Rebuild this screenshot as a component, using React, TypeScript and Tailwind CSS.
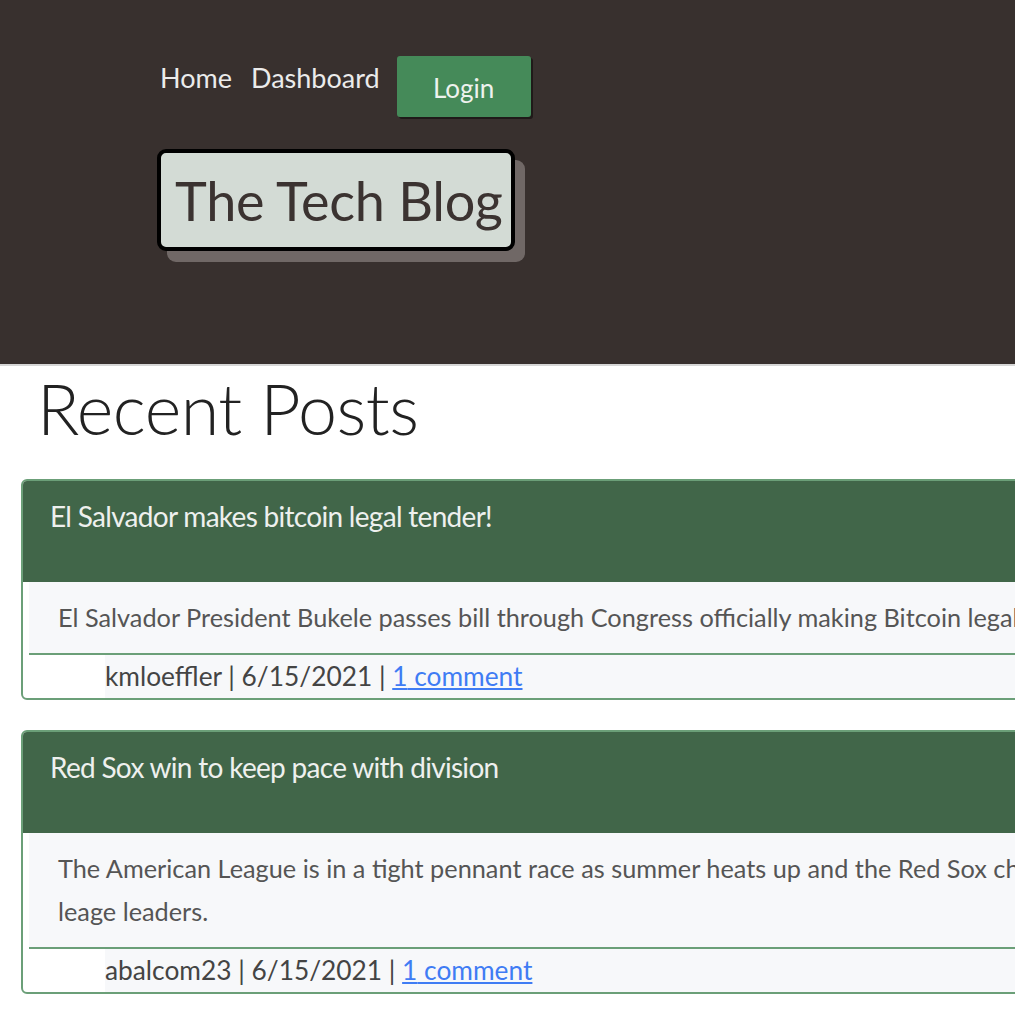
import React from "react";

type Post = {
  id: number;
  title: string;
  body: React.ReactNode;
  author: string;
  date: string;
  comments: number;
};

const posts: Post[] = [
  {
    id: 1,
    title: "El Salvador makes bitcoin legal tender!",
    body: "El Salvador President Bukele passes bill through Congress officially making Bitcoin legal tender.",
    author: "kmloeffler",
    date: "6/15/2021",
    comments: 1,
  },
  {
    id: 2,
    title: "Red Sox win to keep pace with division",
    body: (
      <>
        The American League is in a tight pennant race as summer heats up and the Red Sox chase the
        <br />
        leage leaders.
      </>
    ),
    author: "abalcom23",
    date: "6/15/2021",
    comments: 1,
  },
];

function PostCard({ post }: { post: Post }) {
  return (
    <div className="w-[1300px] rounded-md border-2 border-[#6b9f78] overflow-hidden bg-white">
      {/* header */}
      <div className="bg-[#416649] h-[101px] pl-[27px] pt-[17px]">
        <h3 className="text-[28px] leading-[36px] tracking-[-0.7px] text-[#eef0ee] whitespace-nowrap">{post.title}</h3>
      </div>
      {/* body */}
      <div className="ml-[6px] bg-[#f7f8fa] border-b-2 border-[#6b9f78] pl-[29px] py-[14px] text-[25.3px] leading-[43px] text-[#555] whitespace-nowrap">
        {post.body}
      </div>
      {/* footer */}
      <div className="ml-[6px] pl-[76px] h-[43px]">
        <div className="bg-[#f7f8fa] h-full flex items-center text-[26.3px] text-[#444]">
          <span>
            {post.author} | {post.date} |{" "}
            <a href="#" className="text-[#3f7cf4] underline">
              {post.comments} comment
            </a>
          </span>
        </div>
      </div>
    </div>
  );
}

export default function App() {
  return (
    <div className="w-[1015px] h-[1015px] overflow-hidden bg-white font-['Lato','Liberation_Sans',sans-serif]">
      <header className="bg-[#38302e] h-[366px] border-b-2 border-[#d6d6d6] pl-[157px] pt-[56px]">
        <nav className="flex items-start">
          <a href="#" className="text-[27px] leading-[44px] text-[#ebebeb] ml-[3px]">
            Home
          </a>
          <a href="#" className="text-[27px] leading-[44px] text-[#ebebeb] ml-[19px]">
            Dashboard
          </a>
          <button className="ml-[17px] w-[134px] h-[61px] rounded-[3px] bg-[#458a59] text-[26px] text-[#eef2ee] pt-[3px] shadow-[2px_2px_0_#1f1a19]">
            Login
          </button>
        </nav>
        <div className="mt-[32px] w-[358px] h-[102px] rounded-[9px] border-4 border-black bg-[#d3dbd5] shadow-[10px_11px_0_#706866] flex items-center pl-[14px]">
          <h1 className="text-[54px] leading-none tracking-[-0.3px] text-[#3b3331] whitespace-nowrap pt-[2px]">
            The Tech Blog
          </h1>
        </div>
      </header>

      <main className="pl-[21px]">
        <h2 className="text-[70px] leading-[140px] tracking-[-0.5px] font-light text-[#222] ml-[16px] -mt-[28px]">
          Recent Posts
        </h2>
        <div className="flex flex-col gap-[30px] mt-[1px]">
          {posts.map((post) => (
            <PostCard key={post.id} post={post} />
          ))}
        </div>
      </main>
    </div>
  );
}
